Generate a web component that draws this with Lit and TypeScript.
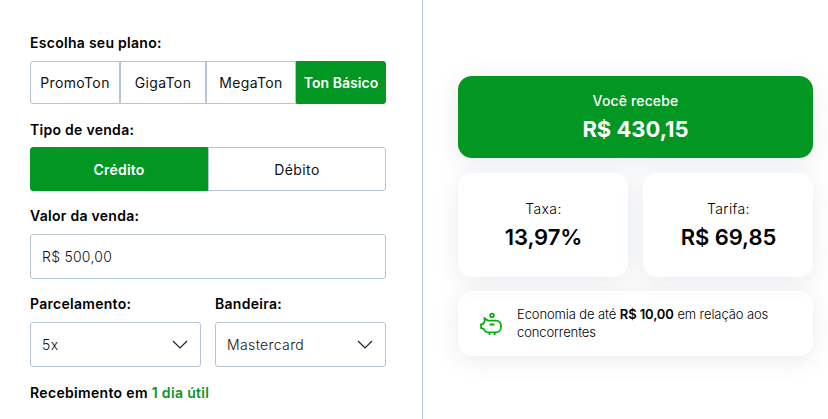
import { LitElement, html, css } from "lit";
import { customElement } from "lit/decorators.js";

const chevron = html`<svg width="16" height="10" viewBox="0 0 16 10" fill="none" stroke="#222" stroke-width="1.2"><path d="M1 1 8 8 15 1"/></svg>`;

@customElement("app-root")
export class AppRoot extends LitElement {
  static styles = css`
    :host { display: flex; width: 828px; height: 419px; overflow: hidden; background: #fff; color: #000; font-family: Inter, sans-serif; font-size: 14px; box-sizing: border-box; }
    * { box-sizing: border-box; }
    .form { width: 423px; height: 419px; border-right: 1px solid #b8c4d4; padding: 34px 36px 0 30px; flex: none; }
    .label { height: 18px; line-height: 18px; font-weight: 600; letter-spacing: .28px; white-space: nowrap; }
    .group { display: flex; }
    .plans { height: 43px; margin: 9px 0 17px; }
    .types { height: 44px; margin: 8px 0 16px; }
    .opt { display: flex; align-items: center; justify-content: center; white-space: nowrap; letter-spacing: .38px; border: 1px solid #b8c4d4; color: #111; }
    .opt:first-child { border-radius: 3px 0 0 3px; }
    .opt:last-child { border-radius: 0 3px 3px 0; }
    .on { background: #029622; border-color: #029622; color: #fff; font-weight: 600; letter-spacing: .05px; }
    .w1, .w3, .w4 { width: 90px; } .w2 { width: 86px; }
    .half { width: 178px; }
    .types .on { letter-spacing: .2px; }
    .field { display: flex; align-items: center; justify-content: space-between; height: 45px; border: 1px solid #b8c4d4; border-radius: 3px; padding: 0 12px 0 11px; font-weight: 300; letter-spacing: .38px; color: #111; }
    .value { margin: 9px 0 16px; letter-spacing: .25px; }
    .row { display: flex; gap: 14px; }
    .row > div { width: 171px; }
    .row .field { margin-top: 9px; }
    .receipt { margin-top: 17px; letter-spacing: .33px; }
    .green { color: #0d922c; }
    .result { flex: 1; padding: 76px 15px 0 35px; }
    .card { border-radius: 14px; background: #fff; box-shadow: 0 4px 24px rgba(40,60,90,.1); }
    .total { height: 82px; background: #029622; color: #fff; text-align: center; padding-top: 16px; font-weight: 500; line-height: 18px; letter-spacing: .15px; }
    .big { font-size: 22px; line-height: 28px; font-weight: 700; letter-spacing: 0; margin-top: 5px; }
    .pair { display: flex; gap: 15px; margin: 15px 0 14px; }
    .small { width: 170px; height: 104px; text-align: center; padding: 27px 0 0 1px; font-weight: 300; line-height: 18px; letter-spacing: .38px; }
    .small .big { font-weight: 600; letter-spacing: -.1px; }
    .saving { height: 65px; display: flex; align-items: center; padding-left: 21px; gap: 14px; font-size: 13px; font-weight: 300; line-height: 18px; letter-spacing: -.1px; white-space: nowrap; }
    .copy { margin-top: -1px; }
    .saving b { font-weight: 600; }
  `;
  render() {
    return html`
      <section class="form">
        <div class="label">Escolha seu plano:</div>
        <div class="group plans"><div class="opt w1">PromoTon</div><div class="opt w2">GigaTon</div><div class="opt w3">MegaTon</div><div class="opt w4 on">Ton Básico</div></div>
        <div class="label">Tipo de venda:</div>
        <div class="group types"><div class="opt half on">Crédito</div><div class="opt half">Débito</div></div>
        <div class="label">Valor da venda:</div>
        <div class="field value">R$ 500,00</div>
        <div class="row">
          <div><div class="label">Parcelamento:</div><div class="field">5x${chevron}</div></div>
          <div><div class="label">Bandeira:</div><div class="field">Mastercard${chevron}</div></div>
        </div>
        <div class="label receipt">Recebimento em <span class="green">1 dia útil</span></div>
      </section>
      <section class="result">
        <div class="card total">Você recebe<div class="big">R$ 430,15</div></div>
        <div class="pair">
          <div class="card small">Taxa:<div class="big">13,97%</div></div>
          <div class="card small">Tarifa:<div class="big">R$ 69,85</div></div>
        </div>
        <div class="card saving">
          <svg width="24" height="25" viewBox="0 0 24 25" fill="none" stroke="#08ad10" stroke-width="1.8"><circle cx="13" cy="4.5" r="1.8"/><path d="M5.5 7.3 9 9.6H17C20 9.6 22 12 22 15.3S20 21.4 17 21.4H9.5C7.2 21.4 5.5 20 4.8 18L2 17V13.4H3.8C4.2 12.3 4.8 11.5 5.7 10.8ZM10.5 13.5H15.5M10.5 21.5V24M15.7 21.5V24"/></svg>
          <div class="copy">Economia de até <b>R$ 10,00</b> em relação aos<br>concorrentes</div>
        </div>
      </section>`;
  }
}
